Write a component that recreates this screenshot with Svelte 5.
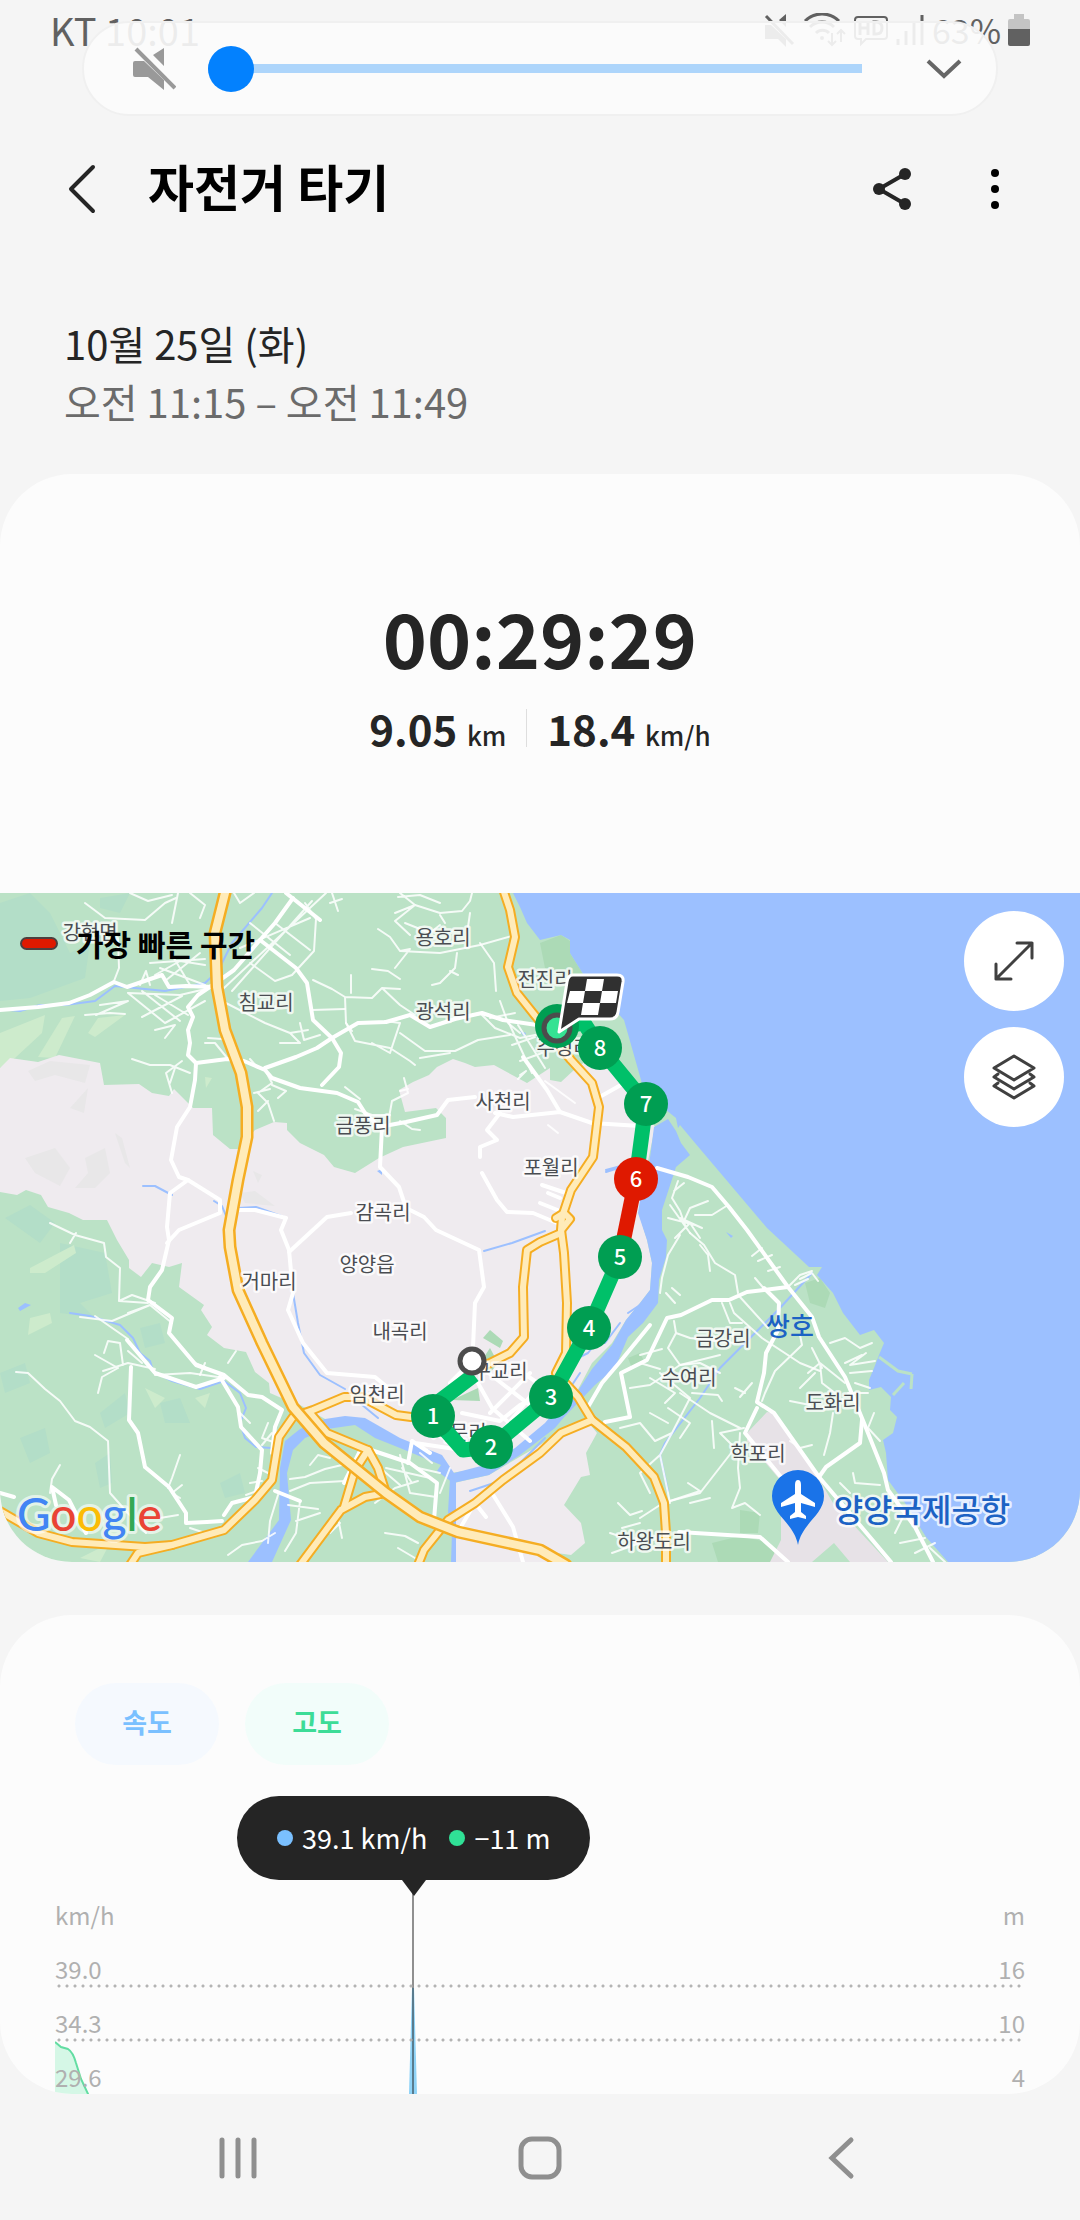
<script lang="ts">
  type Place = { name: string; x: number; y: number };
  type Stop = { label: string; x: number; y: number; fastest?: boolean };

  let volume = $state(0);

  const places: Place[] = [
    { name: "강현면", x: 90, y: 40 },
    { name: "용호리", x: 443, y: 45 },
    { name: "전진리", x: 545, y: 87 },
    { name: "침교리", x: 266, y: 110 },
    { name: "광석리", x: 443, y: 119 },
    { name: "주청리", x: 564, y: 155 },
    { name: "사천리", x: 503, y: 209 },
    { name: "금풍리", x: 363, y: 233 },
    { name: "포월리", x: 551, y: 275 },
    { name: "감곡리", x: 383, y: 320 },
    { name: "양양읍", x: 367, y: 372 },
    { name: "거마리", x: 269, y: 389 },
    { name: "내곡리", x: 400, y: 439 },
    { name: "금강리", x: 723, y: 446 },
    { name: "구교리", x: 500, y: 479 },
    { name: "수여리", x: 689, y: 485 },
    { name: "임천리", x: 377, y: 502 },
    { name: "도화리", x: 833, y: 510 },
    { name: "서문리", x: 459, y: 540 },
    { name: "학포리", x: 758, y: 561 },
    { name: "하왕도리", x: 654, y: 649 },
  ];

  const stops: Stop[] = [
    { label: "1", x: 433, y: 523 },
    { label: "2", x: 491, y: 554 },
    { label: "3", x: 551, y: 504 },
    { label: "4", x: 589, y: 435 },
    { label: "5", x: 620, y: 364 },
    { label: "6", x: 636, y: 286, fastest: true },
    { label: "7", x: 646, y: 211 },
    { label: "8", x: 600, y: 155 },
  ];

  // trunk roads, drawn twice: casing first, then the lighter fill
  const highways = [
    "M226 -4 215 40 217 94 225 137 241 180 247 214 247 244 238 287 229 337 230 354 238 397 262 450 293 514 324 550 386 600 420 624 458 639 540 657 566 672",
  ];
  const trunks = [
    "M503 -4 510 17 515 44 508 74 517 100 537 125 571 167 592 190 599 214 593 264 571 297 562 324 561 337 564 360 567 410 566 460 556 480 578 504 592 527 626 554 654 584 664 610 666 640 666 672",
    "M561 340 540 349 527 357 523 394 524 444 510 460 486 472",
    "M592 527 561 540 540 560 503 587 475 610 448 627 424 657 418 672",
    "M411 524 396 522 362 504 344 504 313 517 293 524 279 544 272 587 255 607 224 637 172 652 145 654 72 649 38 640 0 618",
    "M172 652 138 660 130 672",
    "M310 520 327 540 368 557 378 575 386 600",
    "M386 600 365 604 341 617 300 672",
    "M368 557 355 577 344 614",
    "M556 325 564 320 570 326 562 336",
  ];

  const roads = [
    "M286 0 320 27",
    "M293 5 275 30 260 47 234 77 220 87 198 102 188 114 193 124 188 137 190 150 188 162 196 170 195 187 190 214 177 234 171 267 179 284 188 287 170 300 167 334 169 347 162 377 150 394 148 407 172 425 169 440 196 472 224 482 248 502 262 504 282 517 275 534 272 560",
    "M260 47 296 75 307 90 313 127 332 145 341 160 339 174 322 192",
    "M0 117 38 114 69 110 90 102 114 89 127 94 162 82 169 94 186 93 214 94",
    "M196 170 227 166 244 168 265 177 272 185 300 195 337 200 358 209 365 220 379 234 406 229 437 222 448 207 475 204",
    "M265 175 296 164 317 155 332 145 358 130 386 129 410 122 430 134 455 126 482 120 503 127 537 132",
    "M382 234 380 274 399 294 406 315 424 324 436 337 479 357 484 394 475 410 473 454",
    "M188 287 220 307 220 320 179 337 167 350",
    "M238 317 255 317 286 325 281 337 289 357 293 400 288 417 303 450 327 480 375 484 392 498",
    "M351 320 327 324 289 359",
    "M495 220 513 224 560 219 592 230 640 233",
    "M500 220 487 237 497 247 480 254 480 264",
    "M482 280 497 307 507 319 533 320 557 330",
    "M523 164 547 197 560 219",
    "M657 275 688 284 712 294 729 314 747 337 788 394 812 424 819 444 845 484 864 530 884 580 888 597 915 634 933 669",
    "M788 394 747 399 729 407 712 407 681 422 667 425 647 467 621 480 630 524 605 529",
    "M650 432 619 470 602 490 588 514",
    "M764 395 779 410 778 437 766 460 764 480 757 509 774 520 819 584 864 637 891 669",
    "M679 639 760 644 788 669",
    "M819 584 826 574 860 550 862 527",
    "M757 515 745 540 781 584",
    "M131 474 129 527 138 540 145 574 169 594 186 620 186 630 207 629 222 628",
    "M0 600 14 604M52 594 69 607 86 640M52 594 56 612",
    "M362 554 410 570 437 590 434 627M362 554 344 590",
    "M492 600 513 634 523 669M475 610 486 624M462 632 475 610",
    "M220 484 238 514 241 534 262 557 260 580 255 604 232 610 224 622",
    "M127 447 155 480 196 494 224 485",
    "M275 598 300 608",
    "M478 490 492 515 530 548M486 478 540 520M490 520 530 480M505 535 545 485M520 478 560 505M450 490 470 470M415 550 455 556M430 560 412 548 408 570",
    "M462 520 500 528 520 512 545 500M640 195 628 188 606 160M628 188 596 206",
    "M548 300 560 305M540 310 560 318M542 292 566 300",
  ];

  const lanes = [
    "M85 10 105 25 145 27 165 10 176 5M130 0 148 8 172 2M178 0 172 30M190 0 205 12 200 25",
    "M118 45 119 75 114 88M140 92 146 78 150 92M155 82 180 68 205 72M160 75 205 92M172 62 190 92M150 70 205 66M165 88 200 60",
    "M128 100 165 130M142 98 180 128M155 102 188 122M128 100 180 102 210 95M165 130 205 108M142 124 182 103M100 112 128 108 96 122M85 122 110 120 125 121",
    "M155 137 175 132 165 145M132 166 150 172 170 172 190 180M170 190 175 175M182 168 166 180 172 200M205 150 215 150 228 166M208 145 222 146 235 160",
    "M234 0 240 10 254 0M240 55 310 25M250 30 290 62M275 30 310 57M224 95 326 0M232 98 312 8M305 10 316 26 314 58 292 82 275 88 250 70",
    "M222 108 265 130 290 140 300 150 280 150M290 140 308 137M300 130 304 147 320 142M312 117 345 116",
    "M313 87 332 96 345 104M345 104 372 105 382 95 400 96M351 82 351 100M345 104 346 130 352 138M382 95 400 112 415 122",
    "M372 76 388 78 400 86M378 36 390 44 400 58 410 56 395 75M400 58 440 60 480 52 515 42M332 0 338 18M330 10 342 6",
    "M400 0 415 12 440 20 462 18 470 8 472 0M395 20 415 12 395 28 410 42M470 20 466 48M445 30 440 22M405 30 430 40 440 32M398 4 420 2 440 10",
    "M457 60 455 75 440 90 432 92M450 78 458 82M480 50 494 70 496 98M500 108 508 130 520 140",
    "M346 130 355 148 390 155 410 168 415 172M372 150 390 160 400 130 385 128M400 140 425 158 455 158 478 147 510 142M420 165 450 160",
    "M480 120 495 135 520 145 545 140M490 125 515 120M508 128 532 180M518 132 545 175M512 152 535 144M520 168 542 160M518 186 526 178 520 182",
    "M404 185 408 200 392 208 388 230M400 228 412 236 420 237M408 196 400 198",
    "M265 177 272 190 258 200 268 210 274 228M272 192 286 198 278 205M254 200 270 196M258 218 268 208M250 166 258 175",
    "M345 194 360 206M355 216 372 222 390 222",
    "M50 330 75 342 104 350 106 364 120 375 119 408 148 410M119 408 132 402 155 410M128 420 150 412M80 424 112 428 150 412 172 430M70 350 76 340",
    "M95 423 128 446M104 460 108 448 120 450M95 462 118 475M103 478 128 470 155 476M120 450 123 472M98 500 102 484 118 475M155 482 190 480 218 484M142 470 128 458",
    "M16 479 28 480 45 496 60 508 75 528 90 534 108 548 110 600 126 618 146 640",
    "M60 572 52 586 50 600M180 562 172 585 168 595M182 592 172 600 180 605M160 625 178 622",
    "M200 482 205 470M228 470 236 458M195 470 205 474",
    "M272 540 262 552M268 530 262 545 276 550M250 590 262 588M246 602 262 596M258 575 268 580M240 520 250 530",
    "M290 586 305 584 325 576 342 572M290 598 310 590 345 588M310 572 318 562 330 565",
    "M278 602 270 628 268 650M300 608 296 640 285 658M288 612 318 616M228 662 242 652 262 648 275 640M320 620 296 628M190 635 205 640",
    "M375 610 395 595 418 588M400 562 410 600 436 604M385 640 405 643 418 650M398 655 420 668M372 568 400 592M386 575 430 585M402 575 412 590",
    "M420 560 432 570M418 575 440 580M450 575 440 600M338 625 342 645M330 640 340 630",
    "M678 288 672 305 680 318 686 335M708 308 690 315 683 330M670 312 690 340M668 325 695 332M728 312 712 322 695 322M684 290 674 298M675 345 690 330 700 345M702 335 680 325",
    "M690 340 704 352 715 370 735 382 738 400M700 352 708 362 710 378M680 342 668 362 662 385 660 400M666 400 675 410M672 395 680 402",
    "M762 355 752 363M772 362 758 368M768 378 780 374M755 385 766 398M788 394 800 382 812 378M800 386 812 380 818 388M795 392 808 386",
    "M740 404 768 435M730 410 734 420 762 445 800 470 820 478M722 410 730 430 742 430M800 442 802 452 775 478 765 500 762 508",
    "M674 428 676 440 690 445M676 440 668 455 680 472 720 462M690 445 735 450M662 456 640 462M640 470 660 476M650 485 675 500 665 510",
    "M630 495 650 492 680 472 700 470 720 480M680 500 710 520 740 535M668 515 690 530 680 545M692 500 718 502 722 508M712 528 714 555M740 504 752 490M735 495 745 500M744 535 720 540 735 555 700 600 670 608",
    "M660 480 690 505 672 540 660 562M640 530 655 548 672 540M650 520 668 530M620 535 640 530M660 562 640 580 650 600M660 562 668 600 670 610",
    "M670 608 700 598 688 590M740 540 738 575 740 595 732 615 745 610 760 622M640 625 660 612M622 635 640 630M610 640 640 650 612 660M618 610 630 622 642 618",
    "M808 480 820 470 845 490M820 470 822 490 835 500M800 495 815 480M812 455 822 475M830 450 845 445 860 455 872 450M866 460 850 472 875 468M850 480 872 478M845 470 862 462M855 490 870 495M848 500 868 500",
    "M833 520 830 540 824 562M790 548 800 555 812 552M874 520 868 535 880 548M853 580 855 590 880 592M840 590 850 600M810 512 790 508",
    "M710 605 690 610M905 620 895 640M900 650 925 645M930 655 945 669M915 660 935 650",
    "M545 188 575 210M558 240 548 232",
  ];

  const streams = [
    "M272 0 262 15 232 50 218 78 205 90 165 98 115 93 95 108 65 112 40 112 20 118 0 116",
    "M143 293 155 293 172 302M214 308 222 313 226 323M238 315 256 314 284 324",
    "M70 420 90 423 120 432 133 445 140 460 150 468 153 478 172 488 200 496 224 488 240 500 246 515 240 530 245 545 256 554 272 555",
    "M293 400 298 430 304 460 320 482 345 496",
    "M484 358 512 350 545 338M606 277 632 270M606 279 628 272M350 502 378 525",
    "M812 380 780 415 750 445 720 475 700 505 665 550 660 562 668 598",
    "M578 465 588 460 600 445M560 510 580 480M620 430 605 450M615 455 595 480M628 420 640 412M470 598 500 588M520 570 545 545",
  ];
</script>

<main class="screen">
  <div class="status-bar">
    <div class="carrier">KT <time>10:01</time></div>
    <div class="indicators">
      <svg width="32" height="34" viewBox="0 0 32 34" aria-hidden="true">
        <path d="M1 12h6l15 14v8L14 26H1zM22 1v13l-7-7z" fill="currentColor" />
        <path d="M2 3 29 31" stroke="currentColor" stroke-width="3" />
      </svg>
      <svg width="44" height="34" viewBox="0 0 44 34" fill="none" stroke="currentColor" stroke-width="3" aria-hidden="true">
        <path d="M2 8a24 24 0 0 1 34 0M7 14a17 17 0 0 1 24 0M13 20a9 9 0 0 1 13 0" />
        <circle cx="19" cy="25" r="2" fill="currentColor" stroke="none" />
        <path d="M29 20v12m-4-4 4 4 4-4M38 29V17m-4 4 4-4 4 4" stroke-width="2" />
      </svg>
      <svg width="34" height="34" viewBox="0 0 34 34" fill="none" stroke="currentColor" stroke-width="2" aria-hidden="true">
        <path d="M4 4h26a3 3 0 0 1 3 3v16a3 3 0 0 1-3 3H12l-5 5v-5H4a3 3 0 0 1-3-3V7a3 3 0 0 1 3-3z" />
        <path d="M6 8v14M14 8v14M6 15h8M20 9v12h2q6 0 6-6t-6-6z" stroke-width="3" />
      </svg>
      <svg width="30" height="34" viewBox="0 0 30 34" stroke="currentColor" stroke-width="3" aria-hidden="true">
        <path d="M3 26v6M11 18v14M19 10v22M27 2v30" />
      </svg>
      <span>63%</span>
      <svg width="22" height="34" viewBox="0 0 22 34" aria-hidden="true">
        <path d="M6 1h10v5h4a2 2 0 0 1 2 2v9H0V8a2 2 0 0 1 2-2h4z" fill="#c4c4c4" />
        <path d="M0 16h22v15a2 2 0 0 1-2 2H2a2 2 0 0 1-2-2z" fill="currentColor" />
      </svg>
    </div>
  </div>

  <div class="volume-panel">
    <button class="icon-button" aria-label="음소거">
      <svg width="44" height="44" viewBox="0 0 44 44" aria-hidden="true">
        <path d="M3 14h9L32 33v10L16 30H3a2 2 0 0 1-2-2V16a2 2 0 0 1 2-2zM32 1v18L21 8z" fill="#999" />
        <path d="M4 2 43 41" stroke="#999" stroke-width="4" />
      </svg>
    </button>
    <input type="range" min="0" max="15" aria-label="볼륨" bind:value={volume} />
    <button class="icon-button expand" aria-label="더 보기">
      <svg width="36" height="22" viewBox="0 0 36 22" aria-hidden="true">
        <path d="M2 3 18 18 34 3" fill="none" stroke="#666" stroke-width="4" />
      </svg>
    </button>
  </div>

  <header class="title-bar">
    <button class="icon-button" aria-label="뒤로">
      <svg width="28" height="50" viewBox="0 0 28 50" aria-hidden="true">
        <path d="M25 3 3 25 25 47" fill="none" stroke="#252525" stroke-width="4" stroke-linecap="round" stroke-linejoin="round" />
      </svg>
    </button>
    <h1>자전거 타기</h1>
    <button class="icon-button" aria-label="공유">
      <svg width="40" height="44" viewBox="0 0 40 44" fill="#252525" aria-hidden="true">
        <path d="M33 7 7 22 33 37" fill="none" stroke="#252525" stroke-width="4" />
        <circle cx="7" cy="22" r="6" />
        <circle cx="33" cy="7" r="6" />
        <circle cx="33" cy="37" r="6" />
      </svg>
    </button>
    <button class="icon-button more" aria-label="옵션 더보기">
      <svg width="10" height="44" viewBox="0 0 10 44" aria-hidden="true">
        <circle cx="5" cy="6" r="4" />
        <circle cx="5" cy="22" r="4" />
        <circle cx="5" cy="38" r="4" />
      </svg>
    </button>
  </header>

  <section class="when">
    <p>10월 25일 (화)</p>
    <p class="hours">오전 11:15 – 오전 11:49</p>
  </section>

  <section class="workout">
    <div class="summary">
      <div class="duration">00:29:29</div>
      <div class="metrics">
        <div class="metric">9.05 <span>km</span></div>
        <div class="metric">18.4 <span>km/h</span></div>
      </div>
    </div>

    <div class="map">
      <svg class="map-canvas" viewBox="0 0 1080 669" preserveAspectRatio="xMidYMid slice" role="img" aria-label="운동 경로">
        <rect width="1080" height="669" fill="#bbe2c6" />
        <path class="wood" d="M0 10 30 0 50 20 70 60 90 50 85 85 30 105 0 108zM100 5 130 0 120 20 100 15zM5 325 30 312 55 330 40 350zM60 350 105 360 112 400 80 410 95 425 60 420zM140 435 160 430 165 450 145 455zM100 520 125 500 130 520 105 535zM20 545 45 535 50 560 30 570zM0 480 25 470 30 490 5 500zM95 570 110 560 112 590 100 595zM160 510 180 505 190 530 165 530zM220 590 240 580 245 600 225 605z" />
        <path class="meadow" d="M0 140 45 122 42 140 15 165 0 175zM62 125 75 123 55 165 38 164zM98 125 125 122 95 144 88 140zM30 375 74 352 76 360 45 380 30 380zM30 425 50 420 52 430 28 442zM205 184 212 185 206 195zM145 495 165 505 155 515zM195 505 210 500 205 515zM80 665 110 650 100 669z" />
        <path class="grove" d="M540 50 561 42 570 48 570 60 585 84 560 82 545 75zM805 390 820 385 830 400 825 415 810 410zM712 650 740 643 770 650 778 669 718 669zM740 617 760 620 758 640 740 640zM628 465 640 460 645 470 632 475z" />

        <path class="town" d="M0 175 10 165 38 169 59 162 100 170 104 192 139 191 152 200 169 203 174 196 193 215 212 215 213 242 230 256 239 256 255 237 274 229 287 230 287 237 300 250 324 262 334 274 355 280 379 265 403 254 446 245 446 225 436 215 405 219 399 197 413 189 429 182 437 174 453 166 465 170 475 174 494 172 527 190 550 175 550 187 561 189 574 177 590 165 625 180 655 234 640 307 643 334 647 347 652 370 650 397 640 410 626 427 612 450 592 470 574 504 540 544 489 574 451 580 441 564 396 547 362 527 348 524 327 527 300 512 286 507 270 500 269 490 255 479 246 459 224 455 207 442 212 434 201 417 204 412 179 394 182 370 169 374 152 370 141 384 129 375 129 367 117 347 107 327 83 327 69 320 48 314 41 302 26 297 17 302 0 299z" />
        <path class="town" d="M454 669V590L489 582 540 552 585 525 597 540 586 560 590 582 581 584 564 612 581 630 585 650 571 662 557 660 575 672z" />
        <path class="relief" d="M28 178 50 168 90 172 85 190 55 182 35 188zM25 265 55 255 70 275 60 293 35 280zM85 265 105 255 110 280 95 295 75 295 88 280zM70 215 88 195 84 220zM115 240 125 270 130 275 122 245zM253 278 262 282 258 290zM240 300 255 298 275 313 245 310z" />
        <path class="runway" d="M767 519 747 540 747 548 781 588 781 647 770 669 812 669 834 650 850 669 888 669 833 610 812 574 774 520z" />
        <path class="grove" d="M483 445 490 437 503 448 500 455zM480 470 490 455 498 470 490 480zM452 507 478 495 480 508z" />

        <path class="water" d="M513 0 520 14 527 30 540 47 561 42 570 47 570 60 585 84 624 127 643 194 666 217 676 225 678 235 680 232 695 250 767 335 809 374 822 374 817 382 833 400 843 420 860 442 874 437 884 450 879 462 874 475 869 487 869 497 881 494 891 504 890 517 897 524 893 540 883 547 886 560 888 587 905 610 926 644 948 669H1080V0z" />
        <path class="water" d="M654 234 668 226 676 238 681 250 690 262 676 274 662 317 662 337 667 347 666 364 659 387 658 410 643 430 628 444 615 475 595 492 571 517 548 540 541 540 574 504 592 476 612 452 626 427 640 410 650 397 652 370 647 347 638 320 640 307 648 280z" />
        <path class="water" d="M580 505 555 535 520 562 489 582 453 590 437 578 441 572 400 555 375 545 355 532 327 536 305 545 293 557 287 580 291 627 272 669H248L279 627 280 575 285 548 300 536 325 526 345 523 365 525 400 545 442 562 454 580 485 572 515 555 545 530 570 500z" />
        <path class="water" d="M450 585h6v84h-5l1-30-4-20zM18 415 25 410 31 412 20 418zM377 278 382 276 382 282zM520 138 526 140 524 144zM726 339 733 343 731 345z" />
        <path d="M879 464 898 478 912 481M912 481 911 496M893 502 904 490" fill="none" stroke="#bbe2c6" stroke-width="3" />
        {#each streams as d}<path class="stream" {d} />{/each}

        {#each lanes as d}<path class="lane" {d} />{/each}
        {#each roads as d}<path class="road" {d} />{/each}
        {#each trunks as d}<path class="trunk-casing" {d} />{/each}
        {#each trunks as d}<path class="trunk" {d} />{/each}
        {#each highways as d}<path class="highway-casing" {d} />{/each}
        {#each highways as d}<path class="highway" {d} />{/each}

        {#each places as place}
          <text class="place" x={place.x} y={place.y + 7}>{place.name}</text>
        {/each}
        <text class="place landmark" x="790" y="443">쌍호</text>
        <text class="place airport" x="922" y="629">양양국제공항</text>

        <path d="M798 652C794 630 772 622 772 603a26 26 0 0 1 52 0C824 622 802 630 798 652z" fill="#1a73e8" />
        <path d="M798 587q3 0 3 5v9l14 9v4l-14-4v9l5 4v3l-8-2-8 2v-3l5-4v-9l-14 4v-4l14-9v-9q0-5 3-5z" fill="#fff" />

        <g fill="none" stroke-width="15" stroke-linejoin="round">
          <path d="M474 482 433 513M433 523 463 557 491 554 551 504 589 435 620 364M636 286 646 211 600 155 584 130 557 135" stroke="#00c069" />
          <path d="M636 286 620 364" stroke="#df1900" />
        </g>
        <circle cx="557" cy="133" r="22" fill="#009e52" />
        <circle cx="557" cy="135" r="13" fill="#35e293" stroke="#4c4c4c" stroke-width="5" />
        <circle cx="472" cy="468" r="12" fill="#fff" stroke="#4c4c4c" stroke-width="5" />
        {#each stops as stop}
          <circle cx={stop.x} cy={stop.y} r="22" fill={stop.fastest ? "#df1900" : "#009e52"} />
          <text class="stop" x={stop.x} y={stop.y + 8}>{stop.label}</text>
        {/each}

        <path d="M573 82h44q7 0 6 7l-5 30q-1 7-8 7h-31l-20 13 8-50q1-7 6-7z" fill="#303030" stroke="#fff" stroke-width="3" stroke-linejoin="round" />
        <path d="M587 86h17l-2 12h-17zM570 98h15l-2 12h-16zM602 98h16l-2 12h-16zM583 110h17l-2 12h-17z" fill="#fff" />

        <text class="google" x="17" y="638"><tspan fill="#4285f4">G</tspan><tspan fill="#ea4335">o</tspan><tspan fill="#fbbc05">o</tspan><tspan fill="#4285f4">g</tspan><tspan fill="#34a853">l</tspan><tspan fill="#ea4335">e</tspan></text>
      </svg>

      <div class="legend"><i></i>가장 빠른 구간</div>

      <div class="map-tools">
        <button aria-label="지도 확대">
          <svg width="42" height="42" viewBox="0 0 42 42" aria-hidden="true">
            <path d="M3 39 39 3M24 3h15v15M3 24v15h15" />
          </svg>
        </button>
        <button aria-label="지도 유형">
          <svg width="46" height="46" viewBox="0 0 46 46" aria-hidden="true">
            <path d="M23 2 43 14 23 26 3 14zM7 20 3 23 23 35 43 23 39 20M7 29 3 32 23 44 43 32 39 29" />
          </svg>
        </button>
      </div>
    </div>
  </section>

  <section class="chart-card">
    <div class="chips">
      <button class="chip speed">속도</button>
      <button class="chip altitude">고도</button>
    </div>

    <div class="chart">
      <svg class="series" width="400" height="214" viewBox="0 0 400 214" aria-hidden="true">
        <path d="M0 162 6 167 13 169Q18 172 21 183L26 199 34 216H0z" fill="#d5f7e6" />
        <path d="M0 162 6 167 13 169Q18 172 21 183L26 199 34 216" fill="none" stroke="#62dda2" stroke-width="2" />
        <path d="M354 214 357 108h2l3 106z" fill="#8fd3f7" />
        <path d="M358 0v214" stroke="#252525" stroke-width="1" />
      </svg>
      <div class="row units"><span>km/h</span><span>m</span></div>
      <div class="row"><span>39.0</span><span>16</span></div>
      <div class="row"><span>34.3</span><span>10</span></div>
      <div class="row"><span>29.6</span><span>4</span></div>
      <div class="tooltip">
        <span class="dot speed-dot"></span>39.1 km/h
        <span class="dot altitude-dot"></span>−11 m
      </div>
    </div>
  </section>

  <nav class="nav-bar">
    <button class="icon-button" aria-label="최근 앱">
      <svg width="44" height="44" viewBox="0 0 44 44" aria-hidden="true">
        <path d="M6 4v36M22 4v36M38 4v36" />
      </svg>
    </button>
    <button class="icon-button" aria-label="홈">
      <svg width="44" height="44" viewBox="0 0 44 44" aria-hidden="true">
        <rect x="3" y="3" width="38" height="38" rx="11" />
      </svg>
    </button>
    <button class="icon-button" aria-label="뒤로 가기">
      <svg width="44" height="44" viewBox="0 0 44 44" aria-hidden="true">
        <path d="M31 4 12 22 31 40" />
      </svg>
    </button>
  </nav>
</main>

<style>
  :global(body) {
    margin: 0;
    background: #f5f5f5;
  }

  .screen {
    position: relative;
    font-family: "Noto Sans CJK KR", sans-serif;
    color: #252525;
    background: #f5f5f5;
  }

  button {
    font-family: inherit;
    border: 0;
    padding: 0;
    cursor: pointer;
  }

  .icon-button {
    display: flex;
    align-items: center;
    justify-content: center;
    background: none;
  }

  .status-bar {
    display: flex;
    justify-content: space-between;
    align-items: center;
    height: 60px;
    padding: 0 50px;
    font-size: 38px;
    line-height: 60px;
    color: #616161;
  }

  .indicators {
    display: flex;
    align-items: center;
    gap: 7px;
    font-size: 34px;
  }

  .volume-panel {
    position: absolute;
    top: 21px;
    left: 82px;
    right: 82px;
    box-sizing: border-box;
    height: 95px;
    display: flex;
    align-items: center;
    gap: 32px;
    padding: 0 34px 0 48px;
    border: 2px solid #f0f0f0;
    border-radius: 48px;
    background: rgb(252 252 252 / 90%);
  }

  .volume-panel input {
    flex: 1;
    min-width: 0;
    height: 46px;
    margin: 0;
    appearance: none;
    border-radius: 23px 4px 4px 23px;
    background: linear-gradient(#add5fb, #add5fb) center / 100% 9px no-repeat;
  }

  .volume-panel input::-webkit-slider-thumb {
    appearance: none;
    width: 46px;
    height: 46px;
    border-radius: 50%;
    background: #0381fe;
  }

  .expand {
    margin-left: 32px;
  }

  .title-bar {
    display: flex;
    align-items: center;
    height: 90px;
    margin-top: 84px;
    padding: 0 80px 0 68px;
  }

  h1 {
    flex: 1;
    margin: 0 0 0 52px;
    padding-bottom: 8px;
    font-size: 50px;
    line-height: 82px;
    font-weight: 700;
    color: #000;
  }

  .more {
    margin-left: 78px;
  }

  .when {
    margin-top: 80px;
    padding: 0 64px 44px;
    font-size: 40px;
    line-height: 58px;
  }

  .when p {
    margin: 0;
  }

  .hours {
    color: #6b6b6b;
  }

  .workout {
    overflow: hidden;
    border-radius: 72px;
    background: #fcfcfc;
  }

  .summary {
    padding: 115px 0 146px;
    text-align: center;
  }

  .duration {
    font-size: 75px;
    line-height: 96px;
    font-weight: 700;
  }

  .metrics {
    display: flex;
    justify-content: center;
    margin-top: 24px;
    font-size: 42px;
    line-height: 38px;
    font-weight: 700;
  }

  .metric {
    height: 38px;
    padding: 0 20px;
  }

  .metric + .metric {
    border-left: 1px solid #dedede;
  }

  .metric span {
    font-size: 26px;
    line-height: 26px;
    font-weight: 500;
  }

  .map {
    position: relative;
    height: 669px;
  }

  .map-canvas {
    display: block;
    width: 100%;
    height: 100%;
  }

  .water {
    fill: #9cc0ff;
  }

  .town {
    fill: #efebef;
  }

  .relief {
    fill: #e8e7e8;
  }

  .runway {
    fill: #e7e2e7;
  }

  .wood {
    fill: #b3dec8;
  }

  .meadow {
    fill: #cdebcc;
  }

  .grove {
    fill: #acdab6;
  }

  .stream,
  .lane,
  .road,
  .trunk,
  .trunk-casing,
  .highway,
  .highway-casing {
    fill: none;
    stroke-linejoin: round;
    stroke-linecap: round;
  }

  .stream {
    stroke: #9cc0ff;
    stroke-width: 2;
  }

  .lane {
    stroke: rgb(255 255 255 / 85%);
    stroke-width: 2;
  }

  .road {
    stroke: #fff;
    stroke-width: 4;
  }

  .trunk-casing {
    stroke: #f5ad22;
    stroke-width: 10;
  }

  .trunk {
    stroke: #ffebb9;
    stroke-width: 6;
  }

  .highway-casing {
    stroke: #f5ad22;
    stroke-width: 13;
  }

  .highway {
    stroke: #ffebb9;
    stroke-width: 8;
  }

  .place {
    font-size: 20px;
    text-anchor: middle;
    fill: #4a4d52;
    stroke: rgb(255 255 255 / 75%);
    stroke-width: 5;
    stroke-linejoin: round;
    paint-order: stroke;
  }

  .landmark {
    font-size: 26px;
    font-weight: 500;
    fill: #1c62c4;
    stroke: none;
  }

  .airport {
    font-size: 32px;
    font-weight: 500;
    fill: #1c62c4;
  }

  .stop {
    font-size: 22px;
    font-weight: 500;
    text-anchor: middle;
    fill: #fff;
  }

  .google {
    font-family: Lato, sans-serif;
    font-size: 46px;
    font-weight: 500;
    stroke: rgb(255 255 255 / 60%);
    stroke-width: 6;
    stroke-linejoin: round;
    paint-order: stroke;
  }

  .legend {
    position: absolute;
    top: 26px;
    left: 20px;
    display: flex;
    align-items: center;
    gap: 18px;
    font-size: 30px;
    line-height: 48px;
    font-weight: 700;
    color: #000;
  }

  .legend i {
    box-sizing: border-box;
    width: 38px;
    height: 13px;
    border: 2px solid #4c4040;
    border-radius: 7px;
    background: #df1900;
  }

  .map-tools {
    position: absolute;
    top: 18px;
    right: 16px;
    display: grid;
    gap: 16px;
  }

  .map-tools button {
    display: grid;
    place-items: center;
    width: 100px;
    height: 100px;
    border-radius: 50%;
    background: #fff;
  }

  .map-tools path {
    fill: none;
    stroke: #404040;
    stroke-width: 3;
    stroke-linecap: round;
    stroke-linejoin: round;
  }

  .chart-card {
    overflow: hidden;
    margin-top: 53px;
    padding: 68px 55px 0;
    border-radius: 72px;
    background: #fcfcfc;
  }

  .chips {
    display: flex;
    gap: 26px;
    padding-left: 20px;
  }

  .chip {
    width: 144px;
    height: 82px;
    padding-bottom: 6px;
    border-radius: 41px;
    font-size: 27px;
    font-weight: 700;
  }

  .speed {
    color: #7ac0ff;
    background: #f5f9fe;
  }

  .altitude {
    color: #3ddc97;
    background: #f2fdfa;
  }

  .chart {
    position: relative;
    margin-top: 115px;
  }

  .series {
    position: absolute;
    top: 0;
    left: 0;
  }

  .row {
    position: relative;
    box-sizing: border-box;
    display: flex;
    justify-content: space-between;
    height: 54px;
    padding-top: 17px;
    font-size: 24px;
    line-height: 36px;
    color: #b0b0b0;
    background: radial-gradient(circle, #b4b4b4 1px, transparent 2px) 0 100% / 8px 4px repeat-x;
  }

  .row:nth-last-child(2) {
    height: 52px;
    background: none;
  }

  .units {
    background: none;
  }

  .tooltip {
    position: absolute;
    top: -84px;
    left: 182px;
    display: flex;
    align-items: center;
    height: 84px;
    padding: 0 40px;
    border-radius: 42px;
    font-size: 27px;
    line-height: 84px;
    white-space: nowrap;
    color: #fff;
    background: #252525;
  }

  .tooltip::after {
    content: "";
    position: absolute;
    top: 100%;
    left: 50%;
    margin-left: -12px;
    border: 12px solid transparent;
    border-top: 16px solid #252525;
    border-bottom: 0;
  }

  .dot {
    width: 16px;
    height: 16px;
    margin-right: 9px;
    border-radius: 50%;
  }

  .speed-dot {
    background: #7ac0ff;
  }

  .altitude-dot {
    margin-left: 22px;
    background: #30e196;
  }

  .nav-bar {
    display: flex;
    justify-content: center;
    gap: 258px;
    padding: 42px 0 40px;
  }

  .nav-bar svg {
    fill: none;
    stroke: #8f8f8f;
    stroke-width: 5;
    stroke-linecap: round;
  }
</style>
